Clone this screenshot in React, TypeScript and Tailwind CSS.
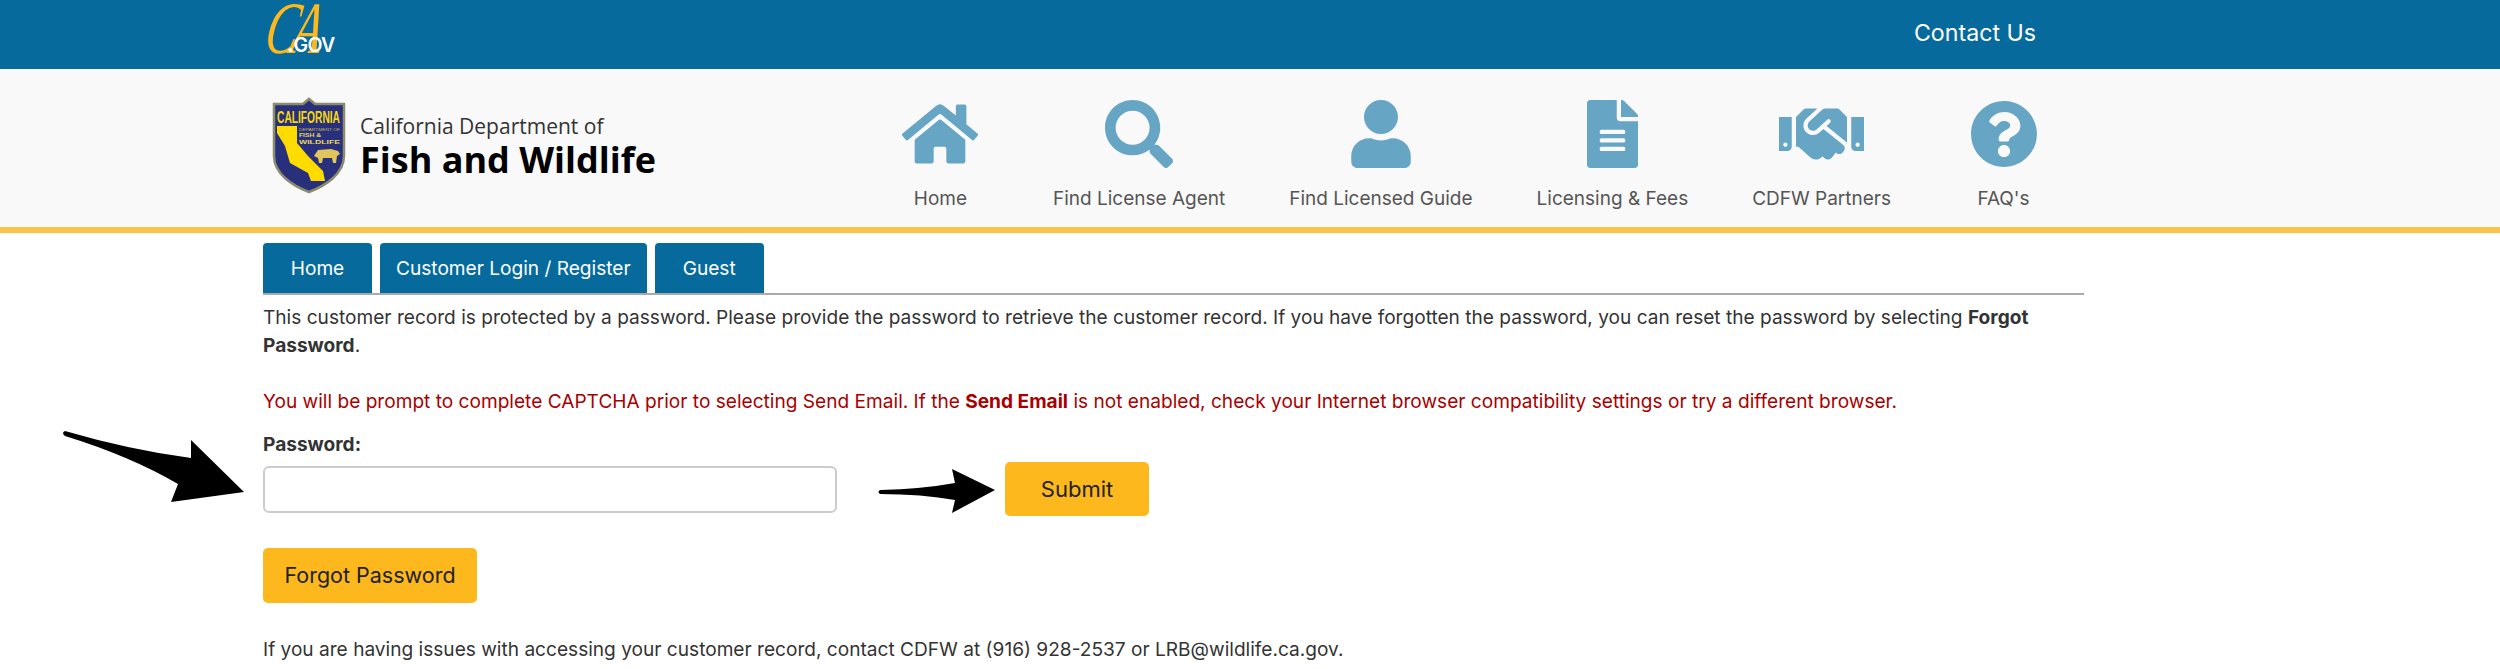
import React from "react";
import {
  FaHome,
  FaSearch,
  FaUser,
  FaFileAlt,
  FaHandshake,
  FaQuestionCircle,
} from "react-icons/fa";

const navItems = [
  { label: "Home", icon: FaHome, size: "h-[68px] w-[76px]" },
  { label: "Find License Agent", icon: FaSearch, size: "h-[68px] w-[68px]" },
  { label: "Find Licensed Guide", icon: FaUser, size: "h-[68px] w-[60px]" },
  { label: "Licensing & Fees", icon: FaFileAlt, size: "h-[68px] w-[51px]" },
  { label: "CDFW Partners", icon: FaHandshake, size: "h-[68px] w-[85px]" },
  { label: "FAQ's", icon: FaQuestionCircle, size: "h-[68px] w-[68px]" },
];

const tabs = ["Home", "Customer Login / Register", "Guest"];

const CaGovLogo = () => (
  <div className="relative mt-[2px] h-[54px] w-[72px]">
    <span className="absolute left-[-3px] top-[-12px] origin-bottom-left scale-x-[0.66] -skew-x-[16deg] font-['Liberation_Serif',serif] text-[74px] leading-[76px] tracking-[-9px] text-[#fdb81e] italic">
      CA
    </span>
    <span className="absolute left-[24px] top-[32px] font-['Inter',sans-serif] text-[19.5px] leading-[22px] font-semibold tracking-[-0.7px] text-white">
      <b className="font-black">.</b>GOV
    </span>
  </div>
);

const Shield = () => (
  <svg viewBox="0 0 72 95" className="h-[95px] w-[72px] shrink-0 overflow-visible">
    <path
      d="M1 6H30L36 1L42 6H71V58C71 76 52 88 36 94C20 88 1 76 1 58Z"
      fill="#28307c"
      stroke="#8b8b6e"
      strokeWidth="2.5"
    />
    <text
      x="4"
      y="25"
      textLength="63"
      lengthAdjust="spacingAndGlyphs"
      className="font-['Liberation_Sans',sans-serif] text-[16px] font-bold"
      fill="#f5d90a"
    >
      CALIFORNIA
    </text>
    <path
      d="M4 28H24V45L35 58L50 73L52 83H38L35 75L17 65L12 48L4 35Z"
      fill="#ffdc00"
    />
    <text
      x="26"
      y="33"
      textLength="41"
      lengthAdjust="spacingAndGlyphs"
      className="font-['Liberation_Sans',sans-serif] text-[4px]"
      fill="#c9b94a"
    >
      DEPARTMENT OF
    </text>
    <text
      x="26"
      y="39"
      textLength="22"
      lengthAdjust="spacingAndGlyphs"
      className="font-['Liberation_Sans',sans-serif] text-[6px] font-bold"
      fill="#e8d860"
    >
      FISH &amp;
    </text>
    <text
      x="26"
      y="46"
      textLength="41"
      lengthAdjust="spacingAndGlyphs"
      className="font-['Liberation_Sans',sans-serif] text-[6px] font-bold"
      fill="#e8d860"
    >
      WILDLIFE
    </text>
    <path
      d="M41 58L45 52L58 51L65 53L67 56L64 58L63 65H60L59 60H50L49 65H46L45 60Z"
      fill="#e0c65a"
    />
  </svg>
);

const BigArrow = () => (
  <svg
    viewBox="0 0 190 80"
    className="absolute left-[-203px] top-[-38px] h-[80px] w-[190px]"
  >
    <path
      d="M5 7Q70 26 131 34L131 16L184 68L111 78L118 60Q70 32 5 12Q1 9 5 7Z"
      fill="#000"
    />
  </svg>
);

const SmallArrow = () => (
  <svg viewBox="0 0 120 50" className="ml-[40px] mr-[8px] h-[50px] w-[120px]">
    <path
      d="M3 26Q45 25 78 19L75 5L118 26L75 49L78 36Q45 30 3 30Q0 28 3 26Z"
      fill="#000"
    />
  </svg>
);

export default function App() {
  return (
    <div className="min-h-[669px] overflow-hidden bg-white font-['Inter',sans-serif] text-[19.1px] text-[#333]">
      {/* Top bar */}
      <div className="h-[69px] bg-[#066a9c]">
        <div className="ml-[263px] flex w-[1821px] justify-between pr-[48px]">
          <CaGovLogo />
          <a className="mt-[18px] text-[23.2px] leading-[30px] text-white">
            Contact Us
          </a>
        </div>
      </div>

      {/* Brand and icon nav */}
      <div className="h-[164px] border-b-[6px] border-[#fdc24a] bg-[#f9f9f9]">
        <div className="ml-[263px] flex w-[1821px] items-start justify-between pr-[32px]">
          <div className="ml-[10px] mt-[29px] flex items-center gap-[15px]">
            <Shield />
            <div className="mt-[-2px] font-['Open_Sans',sans-serif] text-black">
              <div className="text-[21px] leading-[30px] text-[#333]">
                California Department of
              </div>
              <div className="text-[36px] leading-[38px] font-bold">
                Fish and Wildlife
              </div>
            </div>
          </div>
          <nav className="mt-[31px] flex gap-[64px]">
            {navItems.map((item) => (
              <a
                key={item.label}
                className="flex min-w-[97px] flex-col items-center text-[19px] text-[#555]"
              >
                <item.icon className={`${item.size} text-[#67a5c5]`} />
                <span className="mt-[18px] leading-[26px]">{item.label}</span>
              </a>
            ))}
          </nav>
        </div>
      </div>

      {/* Main content */}
      <div className="ml-[263px] w-[1821px]">
        <div className="mt-[10px] flex gap-[8px] border-b-2 border-[#aaa]">
          {tabs.map((tab) => (
            <a
              key={tab}
              className="flex h-[50px] min-w-[109px] items-center justify-center rounded-t-[4px] bg-[#066a9c] px-[16px] text-white"
            >
              {tab}
            </a>
          ))}
        </div>

        <p className="mt-[8px] leading-[28px]">
          This customer record is protected by a password. Please provide the
          password to retrieve the customer record. If you have forgotten the
          password, you can reset the password by selecting{" "}
          <strong className="font-bold">Forgot Password</strong>.
        </p>

        <p className="mt-[28px] leading-[28px] text-[#a80000]">
          You will be prompt to complete CAPTCHA prior to selecting Send Email.
          If the <strong className="font-bold">Send Email</strong> is not
          enabled, check your Internet browser compatibility settings or try a
          different browser.
        </p>

        <label className="mt-[15px] block leading-[28px] font-bold">
          Password:
        </label>

        <div className="relative mt-[4px] flex items-center">
          <BigArrow />
          <input
            type="password"
            className="h-[47px] w-[574px] rounded-[6px] border-2 border-[#ccc] bg-white"
          />
          <SmallArrow />
          <button className="flex h-[54px] w-[144px] items-center justify-center rounded-[5px] bg-[#fdb81e] text-[22px] text-[#212121]">
            Submit
          </button>
        </div>

        <button className="mt-[32px] flex h-[55px] w-[214px] items-center justify-center rounded-[5px] bg-[#fdb81e] text-[21.5px] text-[#212121]">
          Forgot Password
        </button>

        <p className="mt-[32px] leading-[28px]">
          If you are having issues with accessing your customer record, contact
          CDFW at (916) 928-2537 or LRB@wildlife.ca.gov.
        </p>
      </div>
    </div>
  );
}
